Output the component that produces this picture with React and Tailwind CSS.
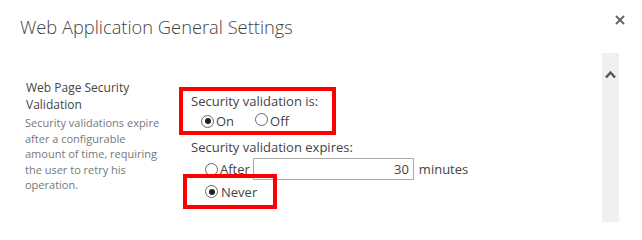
import React from "react";

function Radio({ checked }) {
  return (
    <span className="inline-flex items-center justify-center w-[13px] h-[13px] rounded-full border border-[#666] bg-white shrink-0">
      {checked && <span className="block w-[6px] h-[6px] rounded-full bg-[#222]" />}
    </span>
  );
}

export default function App() {
  return (
    <div className="w-[642px] h-[225px] bg-white overflow-hidden flex flex-col font-['Open_Sans','Liberation_Sans',sans-serif] text-[#444]">
      {/* Header */}
      <div className="flex items-start justify-between h-[53px] pl-[20px] pr-[17px] pt-[13px]">
        <h1 className="text-[18.3px] leading-[28px] font-light text-[#444]">Web Application General Settings</h1>
        <button className="mt-[2px] w-[10px] h-[10px] flex items-center justify-center">
          <svg width="10" height="10" viewBox="0 0 10 10">
            <path d="M1 1L9 9M9 1L1 9" stroke="#666" strokeWidth="2" />
          </svg>
        </button>
      </div>

      {/* Body */}
      <div className="flex flex-1 pr-[23px]">
        <div className="flex flex-1 pl-[26px] pt-[26px]">
          {/* Left description */}
          <div className="w-[153px] shrink-0">
            <div className="text-[12px] leading-[17px] text-[#444]">Web Page Security<br />Validation</div>
            <div className="w-[140px] text-[11px] leading-[15.5px] text-[#777] mt-[2px] -ml-[1px]">
              Security validations expire after a configurable amount of time, requiring the user to retry his operation.
            </div>
          </div>

          {/* Right settings */}
          <div className="flex flex-col pl-[12px] pt-[8px] text-[13px] leading-[18px] text-[#444]">
            <div className="-ml-[12px] w-[157px] h-[48px] border-4 border-[#ff0000] pl-[8px] pt-[1px]">
              <div>Security validation is:</div>
              <div className="flex items-center h-[22px] pl-[10px]">
                <Radio checked />
                <span className="ml-[2px]">On</span>
                <span className="ml-[21px]"><Radio /></span>
                <span className="ml-[2px]">Off</span>
              </div>
            </div>
            <div className="mt-[3px]">Security validation expires:</div>
            <div className="flex items-center h-[22px] mt-[2px] pl-[14px]">
              <Radio />
              <span className="ml-[2px]">After</span>
              <div className="ml-[3px] w-[161px] h-[22px] border border-[#ababab] flex items-center justify-end pr-[4px]">30</div>
              <span className="ml-[5px]">minutes</span>
            </div>
            <div className="-mt-[6px] -ml-[8px] w-[94px] h-[35px] border-4 border-[#ff0000] flex items-center pl-[18px]">
              <Radio checked />
              <span className="ml-[3px]">Never</span>
            </div>
          </div>
        </div>

        {/* Scrollbar */}
        <div className="w-[17px] h-[169px] bg-[#f0f0f0] flex justify-center pt-[17px]">
          <svg width="11" height="9" viewBox="0 0 11 9">
            <path d="M1 7.5L5.5 2.5L10 7.5" fill="none" stroke="#555" strokeWidth="2.5" />
          </svg>
        </div>
      </div>
    </div>
  );
}
